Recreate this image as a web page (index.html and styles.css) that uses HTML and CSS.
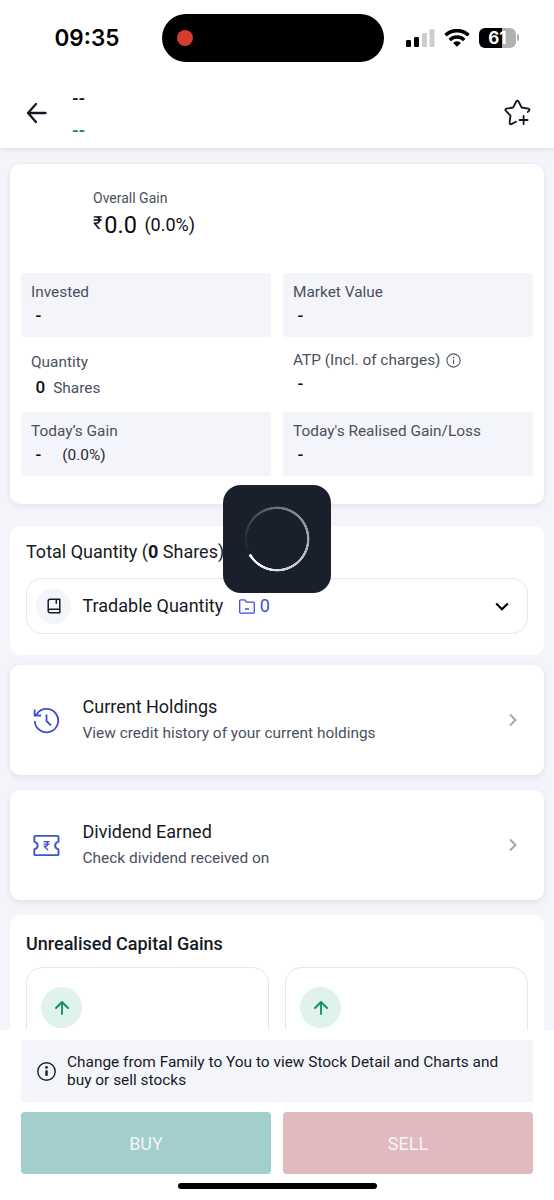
FILE: index.html
```html
<!DOCTYPE html>
<html lang="en">
<head>
<meta charset="utf-8">
<meta name="viewport" content="width=device-width">
<title>Stock Detail</title>
<link rel="stylesheet" href="styles.css">
</head>
<body>
<div class="screen">
  <div class="top">
    <div class="status">
      <span class="time">09:35</span>
      <span class="island"><span class="rec"></span></span>
      <div class="signals">
        <svg width="29" height="18" viewBox="0 0 29 18"><rect x="0" y="11" width="5" height="7" rx="1.3"/><rect x="8" y="8" width="5" height="10" rx="1.3"/><g fill="#cdcdcd"><rect x="16" y="4" width="5" height="14" rx="1.3"/><rect x="23.500" y="0" width="5" height="18" rx="1.3"/></g></svg>
        <svg class="wifi" width="26" height="18" viewBox="0 0 26 18" fill="none" stroke="#000" stroke-width="3.500"><path d="M1.500 6.300a16.500 16.500 0 0 1 23 0M5.700 10.900a10.400 10.400 0 0 1 14.600 0"/><path d="M13 17.800l-3.900-3.900a5.400 5.400 0 0 1 7.800 0z" fill="#000" stroke="none"/></svg>
        <span class="battery">61</span><span class="nub"></span>
      </div>
    </div>
    <header class="header">
      <svg class="back" width="22" height="22" viewBox="0 0 22 22" fill="none" stroke="#111622" stroke-width="2.300" stroke-linecap="round" stroke-linejoin="round"><path d="M19.500 11H2M10 2L2 11l8 9"/></svg>
      <div class="name"><span>--</span><span class="green">--</span></div>
      <svg class="star" width="28" height="28" viewBox="0 0 28 28" fill="none" stroke="#111622" stroke-width="1.800" stroke-linecap="round" stroke-linejoin="round"><path d="M24.800 14l1.200-1.400c.9-1 .4-1.800-.7-2l-6.600-1.100-3.200-6c-.6-1.100-1.600-1.100-2.200 0l-3.200 6-6.700 1.200c-1 .2-1.400 1.100-.7 1.900l4.800 5-.9 7c-.1 1.400.6 2 1.700 1.500l4.700-2.300M20.600 18v8M16.600 22h8"/></svg>
    </header>
  </div>

  <main class="content">
    <section class="card summary">
      <div class="overall">
        <div class="overall-label">Overall Gain</div>
        <div class="overall-value"><span class="rupee">₹</span><span class="big">0.0</span><span class="pct">(0.0%)</span></div>
      </div>
      <div class="stats">
        <div class="stat shade"><span>Invested</span><b>-</b></div>
        <div class="stat shade"><span>Market Value</span><b>-</b></div>
        <div class="stat plain quantity"><span>Quantity</span><div class="line"><b class="zero">0</b><span>Shares</span></div></div>
        <div class="stat plain"><span class="atp">ATP (Incl. of charges)<svg width="15" height="15" viewBox="0 0 15 15" fill="none" stroke="#4d5260" stroke-width="1.100"><circle cx="7.500" cy="7.500" r="6.600"/><path d="M7.500 6.400v4.600M7.500 3.800v1.400"/></svg></span><b>-</b></div>
        <div class="stat shade"><span>Today’s Gain</span><div class="line"><b>-</b><span class="small-pct">(0.0%)</span></div></div>
        <div class="stat shade"><span>Today's Realised Gain/Loss</span><b>-</b></div>
      </div>
    </section>

    <section class="card total">
      <h2>Total Quantity (<b>0</b> Shares)</h2>
      <div class="tradable">
        <span class="disc"><svg width="14" height="16" viewBox="0 0 14 16" fill="none" stroke="#181c27" stroke-width="1.500" stroke-linejoin="round"><path d="M1.200 12.800V3.200Q1.200 1.200 3.200 1.200H12.800V11.200H3a1.800 1.800 0 0 0 0 3.600h9.800v-3.600M9.300 1.200v4.600"/></svg></span>
        <span class="tq">Tradable Quantity</span>
        <svg class="folder" width="16" height="15" viewBox="0 0 16 15" fill="none" stroke="#3c50cf" stroke-width="1.300" stroke-linejoin="round"><path d="M.7 13V2Q.7.8 1.900.8h3.300q.8 0 1.200.7l.9 1.700h6.800q1.200 0 1.200 1.200V13q0 1.200-1.200 1.200H1.900Q.7 14.200.7 13zM6 10h4"/></svg>
        <span class="count">0</span>
        <svg class="down" width="14" height="9" viewBox="0 0 14 9" fill="none" stroke="#000" stroke-width="2.100"><path d="M1.200 1.400L7 7.200l5.800-5.800"/></svg>
      </div>
    </section>

    <section class="card link">
      <svg width="27" height="27" viewBox="0 0 27 27" fill="none" stroke="#3c50cf" stroke-width="1.800"><path d="M1.800 14A11.700 11.700 0 1 0 4 6.800L2 9M1.600 2.500V8.500H8M13.500 7.500V14l4.500 4.300"/></svg>
      <div class="text"><h3>Current Holdings</h3><p>View credit history of your current holdings</p></div>
      <svg width="8" height="14" viewBox="0 0 8 14" fill="none" stroke="#a6a6aa" stroke-width="2"><path d="M1 1.500L6.500 7 1 12.500"/></svg>
    </section>

    <section class="card link">
      <svg width="27" height="27" viewBox="0 0 27 27" fill="none" stroke="#3c58c8" stroke-width="1.900" stroke-linejoin="round"><path d="M2.200 3.900h22.400q.9 0 .9.900v4.800q-3.400 1-3.400 3.900t3.400 3.900v4.800q0 .9-.9.900H2.200q-.9 0-.9-.9v-4.800q3.400-1 3.400-3.900t-3.400-3.900V4.800q0-.9.900-.9z"/><path d="M10.500 9.600h6.200M10.500 12.100h6.200M11 9.600h1.200q2.500 0 2.500 2.300t-2.500 2.300h-1l3.800 3.800" stroke-width="1.300"/></svg>
      <div class="text"><h3>Dividend Earned</h3><p>Check dividend received on</p></div>
      <svg width="8" height="14" viewBox="0 0 8 14" fill="none" stroke="#a6a6aa" stroke-width="2"><path d="M1 1.500L6.500 7 1 12.500"/></svg>
    </section>

    <section class="card gains">
      <h2>Unrealised Capital Gains</h2>
      <div class="gain-row">
        <div class="gain"><span class="up"><svg width="14" height="14" viewBox="0 0 14 14" fill="none" stroke="#0b8c70" stroke-width="1.800" stroke-linecap="round" stroke-linejoin="round"><path d="M7 13V1M1 7l6-6 6 6"/></svg></span></div>
        <div class="gain"><span class="up"><svg width="14" height="14" viewBox="0 0 14 14" fill="none" stroke="#0b8c70" stroke-width="1.800" stroke-linecap="round" stroke-linejoin="round"><path d="M7 13V1M1 7l6-6 6 6"/></svg></span></div>
      </div>
    </section>
  </main>

  <footer class="footer">
    <div class="notice">
      <svg width="19" height="19" viewBox="0 0 19 19" fill="none" stroke="#191d28"><circle cx="9.500" cy="9.500" r="8.700" stroke-width="1.400"/><path d="M9.500 8.300v5.500" stroke-width="2.400"/><circle cx="9.500" cy="5.400" r="1.400" fill="#191d28" stroke="none"/></svg>
      <p>Change from Family to You to view Stock Detail and Charts and<br>buy or sell stocks</p>
    </div>
    <div class="actions"><button class="buy">BUY</button><button class="sell">SELL</button></div>
    <div class="home"></div>
  </footer>

  <div class="loader"><div class="ring"></div><span class="cap"></span></div>
</div>
</body>
</html>
```
FILE: styles.css
```css
* { box-sizing: border-box; margin: 0; padding: 0; }
body { font-family: Roboto, "Liberation Sans", sans-serif; color: #161a25; background: #fff; }
svg { display: block; flex: none; }
h2, h3, button { font-weight: 400; font-size: 18px; }

.screen { position: relative; width: 554px; height: 1200px; display: flex; flex-direction: column; overflow: hidden; }

.top { position: relative; z-index: 1; flex: none; height: 148px; background: #fff; box-shadow: 0 1px 5px rgba(40, 40, 70, .13); }
.status { display: flex; align-items: center; height: 76px; padding-left: 54.500px; }
.time { width: 107.500px; font: 600 22.500px/28px Inter, sans-serif; color: #000; }
.island { display: flex; align-items: center; width: 222px; height: 48px; padding-left: 15px; border-radius: 24px; background: #000; }
.rec { width: 16px; height: 16px; border-radius: 50%; background: #d43c2f; }
.signals { display: flex; align-items: center; margin-left: 22px; padding-bottom: 1px; }
.wifi { margin: 0 9px 0 9px; }
.battery { width: 37px; height: 20px; border-radius: 6px; background: linear-gradient(90deg, #000 61%, #b1b1b1 61%); color: #fff; font: 700 17px/20px Inter, sans-serif; text-align: center; }
.nub { width: 2px; height: 7px; margin-left: 1px; border-radius: 0 3px 3px 0; background: #b1b1b1; }
.header { display: flex; align-items: center; height: 72px; padding: 2px 23px 0 26px; }
.name { display: flex; flex-direction: column; flex: 1; gap: 10px; margin-left: 24px; padding-top: 2px; font-size: 17px; font-weight: 700; line-height: 22px; letter-spacing: -.2px; }
.green { color: #0b8c70; }
.star { margin-bottom: 3px; }

.content { height: 882px; overflow: hidden; padding: 16px 10px 0; background: #f4f5fb; }
.card { border-radius: 10px; background: #fff; }

.summary { height: 340px; margin-bottom: 22px; padding: 25px 11px 0; box-shadow: 0 2px 6px rgba(40, 40, 80, .09); }
.overall { height: 84px; padding-left: 72px; }
.overall-label { color: #4a5060; font-size: 14px; line-height: 18px; }
.overall-value { display: flex; align-items: center; height: 34px; padding-top: 1px; color: #0b0d12; line-height: 34px; }
.rupee { align-self: flex-start; margin-right: 2px; font-size: 18px; line-height: 30px; }
.big { font-size: 23.500px; }
.pct { margin-left: 7.500px; font-size: 18px; }
.stats { display: grid; grid-template-columns: 250px 250px; grid-template-rows: 64px 75px 64px; column-gap: 12px; }
.stat { padding: 10px 10px 0; color: #4a5060; font-size: 15.400px; line-height: 18px; }
.shade { background: #f4f5fb; border-radius: 2px; }
.stat > span { display: block; }
.stat b { display: inline-block; margin: 5px 0 0 4.500px; color: #0b0d12; font-size: 17px; font-weight: 500; line-height: 18px; }
.plain { padding-top: 14px; }
.quantity { padding-top: 16px; }
.line { display: flex; align-items: baseline; }
.stat .zero { margin: 7px 8px 0 4.500px; }
.small-pct { margin-left: 21px; color: #242936; }
.stat .atp { display: flex; align-items: center; gap: 6px; }

.total { height: 129px; margin-bottom: 10px; padding: 14px 16px 0; }
.total h2 { line-height: 24px; }
.tradable { display: flex; align-items: center; height: 56px; margin-top: 14px; padding: 0 18px 0 9px; border: 1px solid #e6e6ed; border-radius: 16px; font-size: 18px; line-height: 22px; }
.disc { display: flex; align-items: center; justify-content: center; width: 35px; height: 35px; border-radius: 50%; background: #f4f5fb; }
.tq { margin: -1px 0 0 11.500px; }
.folder { margin: 0 5px 0 15.500px; }
.count { flex: 1; margin-top: -1px; color: #3c50cf; }

.link { display: flex; align-items: center; height: 110px; margin-bottom: 15px; padding: 0 27px 0 23px; box-shadow: 0 2px 6px rgba(40, 40, 80, .1); }
.text { flex: 1; margin-left: 22.500px; }
.text h3 { line-height: 26px; }
.text p { color: #4a5060; font-size: 15.450px; line-height: 26px; }

.gains { height: 200px; padding: 17px 16px 0; }
.gains h2 { font-weight: 500; line-height: 24px; }
.gain-row { display: grid; grid-template-columns: 1fr 1fr; gap: 16px; margin-top: 11px; }
.gain { height: 150px; padding: 19px 14px; border: 1px solid #e6e6ed; border-radius: 16px; }
.up { display: flex; align-items: center; justify-content: center; width: 41px; height: 41px; border-radius: 50%; background: #dff2ec; }

.footer { flex: 1; padding: 10px 21px 0; background: #fff; }
.notice { display: flex; align-items: center; height: 62px; padding-left: 16px; background: #f4f5fb; }
.notice p { margin-left: 11px; font-size: 15.430px; line-height: 18px; white-space: nowrap; }
.actions { display: grid; grid-template-columns: 250px 250px; gap: 12px; margin-top: 10px; }
.actions button { height: 62px; border: 0; border-radius: 4px; color: #f2f3f8; font-family: inherit; }
.buy { background: #a2cfcb; }
.sell { background: #e1babf; }
.home { width: 199px; height: 6px; margin: 9px auto 0; border-radius: 3px; background: #000; }

.loader { position: absolute; z-index: 2; left: 223px; top: 485px; width: 108px; height: 108px; border-radius: 18px; background: #19202b; }
.ring { position: absolute; inset: 21px; border-radius: 50%; background: conic-gradient(from 238deg, #19202b, #30363f 14%, #70747b 35%, #b5b7ba 65%, #fff 100%); mask: radial-gradient(circle, transparent 29.700px, #000 30.200px, #000 32.200px, transparent 32.700px); }
.cap { position: absolute; left: 26px; top: 69px; width: 3px; height: 3px; border-radius: 50%; background: #fff; }
```
